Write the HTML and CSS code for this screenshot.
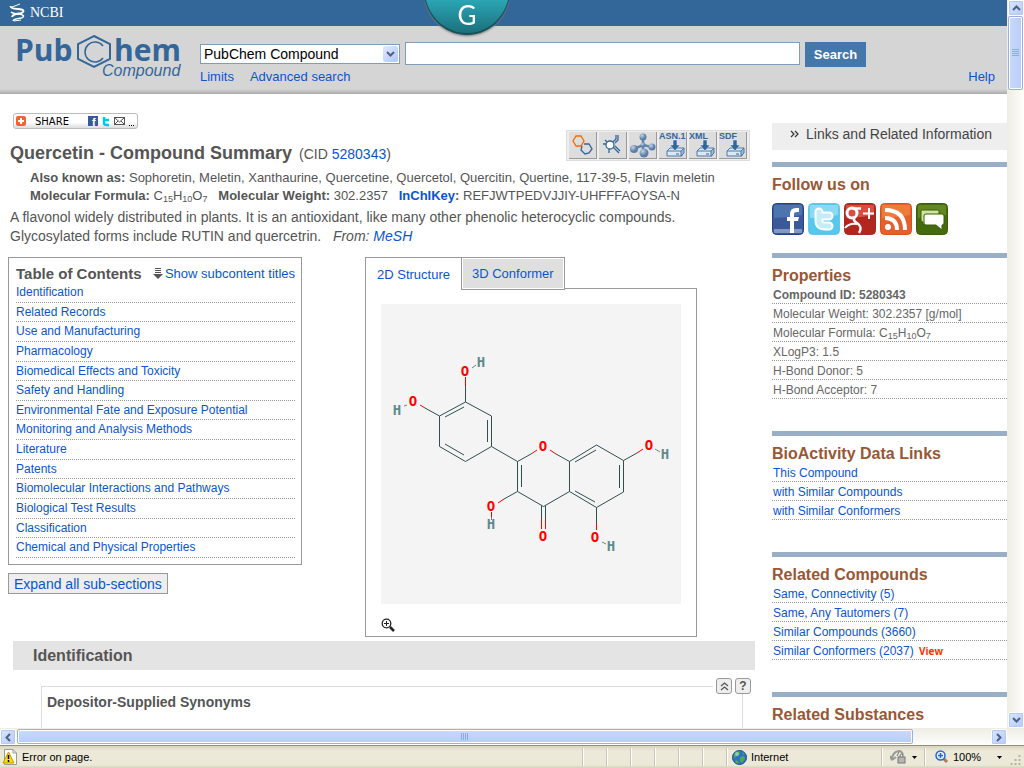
FILE: index.html
```html
<!DOCTYPE html>
<html lang="en">
<head>
  <meta charset="UTF-8" />
  <meta name="viewport" content="width=device-width, initial-scale=1.0"/>
  <title>Quercetin - PubChem</title>
  <link rel="stylesheet" href="styles.css">
</head>
<body>
  <div class="view">
    <div class="page">
      <div class="ncbi-bar">
        <a href="#" class="ncbi">
          <svg width="16" height="20" viewBox="0 0 16 20" fill="none" stroke="#fff">
            <path d="M1.500 3C2 8 14 4 14.500 8C14 12 5 9 3 14" stroke-width="2"/>
            <path d="M2 9C5 12 14 10 14.500 13C14 17 6 14 4 18" stroke-width="1.600"/>
            <path d="M3 4L11 1M5 18L12 17" stroke-width="1"/>
          </svg>
          NCBI
        </a>
      </div>
      <a href="#" class="badge" aria-label="G">
        <svg width="84" height="36" viewBox="0 0 84 36">
          <defs>
            <linearGradient id="teal" x1="0" y1="0" x2="0" y2="1">
              <stop offset="0" stop-color="#2aa5b4"/><stop offset="1" stop-color="#1d6f7c"/>
            </linearGradient>
          </defs>
          <path d="M0 0C5 21 22 35 42 35S79 21 84 0Z" fill="#14525c"/>
          <path d="M1 0C6 20 23 33 42 33S78 20 83 0Z" fill="url(#teal)"/>
          <text x="42" y="25" text-anchor="middle" class="badge-g">G</text>
        </svg>
      </a>

      <header class="header">
        <a href="#" class="logo">
          <svg width="172" height="52" viewBox="0 0 172 52">
            <text x="0" y="27" class="logo-big">Pub</text>
            <text x="99" y="27" class="logo-big">hem</text>
            <g fill="none" stroke="#369">
              <path d="M79 2L95 10V25L79 33L63 25V10Z" stroke-width="2"/>
              <path d="M88 12A10 10 0 1 0 88 24" stroke-width="1.5"/>
            </g>
            <text x="87" y="42" class="logo-small">Compound</text>
          </svg>
        </a>
        <form class="search">
          <div class="search-row">
            <div class="select-wrap">
              <select aria-label="Database">
                <option>PubChem Compound</option>
              </select>
              <span class="arrow"><svg width="9" height="6" viewBox="0 0 9 6"><path d="M1 1L4.500 4.500L8 1" fill="none" stroke="#4d6185" stroke-width="2"/></svg></span>
            </div>
            <input type="text" class="query" aria-label="Search term">
            <button type="button" class="btn-search">Search</button>
          </div>
          <div class="search-links">
            <a href="#">Limits</a>
            <a href="#">Advanced search</a>
            <a href="#" class="help">Help</a>
          </div>
        </form>
      </header>

      <div class="columns">
        <main class="main">
          <button type="button" class="share">
            <svg width="10" height="10" viewBox="0 0 10 10"><rect width="10" height="10" rx="2" fill="#f26334"/><path d="M5 2V8M2 5H8" stroke="#fff" stroke-width="2"/></svg>
            <span class="share-text">SHARE</span>
            <svg width="47" height="11" viewBox="0 0 47 11">
              <rect width="10" height="10" fill="#3b5998"/>
              <text x="4" y="10" class="mini-f">f</text>
              <path d="M16 1V7Q16 9 19 9H21M15 4H21" fill="none" stroke="#00c8e8" stroke-width="2.500"/>
              <rect x="26.500" y="1.500" width="10" height="7" fill="#fff" stroke="#555"/>
              <path d="M27 2L31.500 6L36 2M27 8L30 5M36 8L33 5" fill="none" stroke="#555"/>
              <path d="M41 9.500H42M43 9.500H44M45 9.500H46" stroke="#000"/>
            </svg>
          </button>

          <div class="title-row">
            <h1>Quercetin - Compound Summary <span class="cid">(CID <a href="#">5280343</a>)</span></h1>
            <div class="tools">
              <button type="button" aria-label="Similar compounds">
                <svg width="24" height="24" viewBox="0 0 24 24" fill="none"><path d="M5 3H10L13 8L10 13H5L2 8Z" stroke="#f60" stroke-width="1.300"/><path d="M13 11H18L21 16L18 20L14 21L10 17L11 13" stroke="#369" stroke-width="1.300"/></svg>
              </button>
              <button type="button" aria-label="Structure search">
                <svg width="24" height="24" viewBox="0 0 24 24" fill="none" stroke="#369" stroke-width="1.300"><circle cx="9" cy="12" r="4" fill="#fff"/><path d="M2 11H5M8 16V20M12 9L15 6V2M17 2V7L14 10M12 14L18 20M14 13L19 18M6 9L4 7"/></svg>
              </button>
              <button type="button" aria-label="3D conformers">
                <svg width="26" height="26" viewBox="0 0 26 26"><defs><radialGradient id="ball" cx=".35" cy=".3"><stop offset="0" stop-color="#c4d5e8"/><stop offset="1" stop-color="#5c7fa8"/></radialGradient></defs><path d="M13 5V21M4 17L13 13L22 15" fill="none" stroke="#6485aa" stroke-width="2.500"/><g fill="url(#ball)"><circle cx="13" cy="5" r="3.500"/><circle cx="4" cy="17" r="4"/><circle cx="22" cy="15" r="3.500"/><circle cx="14" cy="21" r="4.500"/><circle cx="13" cy="13" r="2.500"/></g></svg>
              </button>
              <button type="button" aria-label="Download ASN.1">
                <svg width="28" height="28" viewBox="0 0 28 28"><text x="0" y="8" class="fmt">ASN.1</text><use href="#disk"/></svg>
              </button>
              <button type="button" aria-label="Download XML">
                <svg width="28" height="28" viewBox="0 0 28 28"><text x="0" y="8" class="fmt">XML</text><use href="#disk"/></svg>
              </button>
              <button type="button" aria-label="Download SDF">
                <svg width="28" height="28" viewBox="0 0 28 28">
                  <defs>
                    <g id="disk">
                      <path d="M8 20L11 17H25L23 20V25H8Z" fill="#dce9f5" stroke="#4a78a8"/>
                      <path d="M8 20H22L25 17V22L22 25V20" fill="#9dbcd9" stroke="#4a78a8"/>
                      <path d="M14 9H18V14H21L16 20L11 14H14Z" fill="#336699" stroke="#e8f0f8" stroke-width=".5"/>
                      <path d="M17 23H20" stroke="#369"/>
                    </g>
                  </defs>
                  <text x="0" y="8" class="fmt">SDF</text><use href="#disk"/>
                </svg>
              </button>
            </div>
          </div>

          <div class="facts">
            <p><b>Also known as:</b> Sophoretin, Meletin, Xanthaurine, Quercetine, Quercetol, Quercitin, Quertine, 117-39-5, Flavin meletin</p>
            <p><b>Molecular Formula:</b> C<sub>15</sub>H<sub>10</sub>O<sub>7</sub> &nbsp; <b>Molecular Weight:</b> 302.2357 &nbsp; <b><a href="#">InChIKey</a>:</b> REFJWTPEDVJJIY-UHFFFAOYSA-N</p>
          </div>
          <p class="desc">A flavonol widely distributed in plants. It is an antioxidant, like many other phenolic heterocyclic compounds.<br>
          Glycosylated forms include RUTIN and quercetrin. &nbsp; <i>From: <a href="#">MeSH</a></i></p>

          <div class="overview">
            <div class="toc-col">
              <nav class="toc">
                <div class="toc-head">
                  <h2>Table of Contents</h2>
                  <a href="#"><svg width="12" height="12" viewBox="0 0 12 12"><path d="M3 .5H9M3 2.500H9M3 4.500H9" stroke="#555"/><path d="M1 6H11L6 11Z" fill="#555"/></svg>Show subcontent titles</a>
                </div>
                <ul>
                  <li><a href="#">Identification</a></li>
                  <li><a href="#">Related Records</a></li>
                  <li><a href="#">Use and Manufacturing</a></li>
                  <li><a href="#">Pharmacology</a></li>
                  <li><a href="#">Biomedical Effects and Toxicity</a></li>
                  <li><a href="#">Safety and Handling</a></li>
                  <li><a href="#">Environmental Fate and Exposure Potential</a></li>
                  <li><a href="#">Monitoring and Analysis Methods</a></li>
                  <li><a href="#">Literature</a></li>
                  <li><a href="#">Patents</a></li>
                  <li><a href="#">Biomolecular Interactions and Pathways</a></li>
                  <li><a href="#">Biological Test Results</a></li>
                  <li><a href="#">Classification</a></li>
                  <li><a href="#">Chemical and Physical Properties</a></li>
                </ul>
              </nav>
              <button type="button" class="expand">Expand all sub-sections</button>
            </div>

            <div class="structure">
              <div class="tabs">
                <button type="button" class="tab active">2D Structure</button>
                <button type="button" class="tab">3D Conformer</button>
              </div>
              <div class="panel">
                <svg class="molecule" width="300" height="300" viewBox="0 0 300 300">
                  <g fill="none" stroke="#2f4f4f" stroke-width="1">
                    <!-- catechol ring -->
                    <path d="M84.500 98L110.500 112V142.500L84.500 157.500L58.500 142.500V112Z"/>
                    <path d="M64 113L83 103M106.500 116V138M64 140L83 151"/>
                    <path d="M84.500 98V82M58.500 112L44 104M110.500 142.500L136.500 157.500"/>
                    <!-- chromenone -->
                    <path d="M150 150L136.500 157.500V187.500L162.500 202.500L188.500 187.500V157.500L175 150"/>
                    <path d="M140.500 161V183M188.500 157.500L215.500 141L242.500 156.500V188L215.500 203.500L188.500 187.500"/>
                    <path d="M194 158L215 146M238.500 161V184M194 187L214 198"/>
                    <path d="M160.500 202V216M164.500 202V216M136.500 187.500L123 195M242.500 156.500L256 149M215.500 203.500V220"/>
                  </g>
                  <g fill="none" stroke="#f00" stroke-width="1">
                    <path d="M84.500 82V73M44 104L39 101M150 150L156 146M175 150L169 146M123 195L117 199"/>
                    <path d="M160.500 216V225M164.500 216V225M256 149L262 145M215.500 220V226M110.500 208V213"/>
                  </g>
                  <path d="M91 64L95 61M26 101L23 102M274 145L279 148M221 238L225 240M110.500 213V216" fill="none" stroke="#5f8a8a"/>
                  <g class="atom oxygen">
                    <text x="84" y="72">O</text>
                    <text x="32" y="102">O</text>
                    <text x="162" y="147">O</text>
                    <text x="268" y="146">O</text>
                    <text x="110" y="207">O</text>
                    <text x="162" y="237">O</text>
                    <text x="214" y="238">O</text>
                  </g>
                  <g class="atom hydrogen">
                    <text x="100" y="63">H</text>
                    <text x="16" y="111">H</text>
                    <text x="284" y="155">H</text>
                    <text x="110" y="225">H</text>
                    <text x="230" y="247">H</text>
                  </g>
                </svg>
                <button type="button" class="magnify" aria-label="Zoom">
                  <svg width="14" height="14" viewBox="0 0 14 14" fill="none"><circle cx="5.500" cy="5.500" r="4.300" stroke="#222" stroke-width="1.300"/><path d="M5.500 3V8M3 5.500H8" stroke="#222"/><path d="M9 9L13 13" stroke="#222" stroke-width="2.500"/></svg>
                </button>
              </div>
            </div>
          </div>

          <h2 class="section-title">Identification</h2>
          <section class="sub">
            <h3>Depositor-Supplied Synonyms</h3>
            <div class="sub-tools">
              <button type="button" aria-label="Collapse"><svg width="9" height="9" viewBox="0 0 9 9"><path d="M1 4L4.500 1L8 4M1 8L4.500 5L8 8" fill="none" stroke="#555" stroke-width="1.300"/></svg></button>
              <button type="button">?</button>
            </div>
          </section>
        </main>

        <aside class="side">
          <a href="#" class="links-info"><svg width="9" height="8" viewBox="0 0 9 8"><path d="M1 1L4 4L1 7M5 1L8 4L5 7" fill="none" stroke="#333" stroke-width="1.200"/></svg>Links and Related Information</a>

          <section class="box">
            <h2>Follow us on</h2>
            <div class="social">
              <a href="#" aria-label="Facebook"><svg width="32" height="32" viewBox="0 0 32 32"><rect x=".5" y=".5" width="31" height="31" rx="4" fill="#3b5998" stroke="#1f4384"/><path d="M2 2H30V12Q16 15 2 15Z" fill="#4c74ad"/><path d="M2 26H30V30H2Z" fill="#8397c4"/><path d="M18 30V18H15V14H18V11Q18 5 24 5H27V9H25Q22 9 22 11V14H27L26 18H22V30Z" fill="#fff"/></svg></a>
              <a href="#" aria-label="Twitter"><svg width="32" height="32" viewBox="0 0 32 32"><rect x=".5" y=".5" width="31" height="31" rx="4" fill="#55c8ee" stroke="#6cc3e4"/><path d="M2 2H30V12Q16 15 2 15Z" fill="#8bdaf3"/><path d="M11 9V18Q11 23 17 23H21M11 13H21" fill="none" stroke="#fff" stroke-width="9" stroke-linecap="round"/><path d="M11 9V18Q11 23 17 23H21M11 13H21" fill="none" stroke="#c4ecfa" stroke-width="5" stroke-linecap="round"/></svg></a>
              <a href="#" aria-label="Google Plus"><svg width="32" height="32" viewBox="0 0 32 32"><rect x=".5" y=".5" width="31" height="31" rx="4" fill="#b3261e" stroke="#a52a22"/><path d="M2 2H30V12Q16 15 2 15Z" fill="#d94e40"/><g fill="none" stroke="#fff"><ellipse cx="8" cy="10" rx="5" ry="5" stroke-width="3"/><path d="M8 5.500H17M11 15Q8 17 13 20Q19 24 15 30" stroke-width="2.500"/><path d="M1 25Q5 20 13 21M25 5V16M19 10.500H30" stroke-width="2"/></g></svg></a>
              <a href="#" aria-label="RSS"><svg width="32" height="32" viewBox="0 0 32 32"><rect x=".5" y=".5" width="31" height="31" rx="4" fill="#e6602b" stroke="#d8521e"/><path d="M2 2H30V12Q16 15 2 15Z" fill="#f07a3a"/><circle cx="8" cy="24" r="3" fill="#fff"/><path d="M5 15Q17 15 17 27M5 7Q25 7 25 27" fill="none" stroke="#fff" stroke-width="4"/></svg></a>
              <a href="#" aria-label="Blog"><svg width="32" height="32" viewBox="0 0 32 32"><rect x=".5" y=".5" width="31" height="31" rx="4" fill="#466b0e" stroke="#3c5c0a"/><path d="M2 2H30V12Q16 15 2 15Z" fill="#64861f"/><path d="M6 7H22Q23 7 23 8V17Q23 19 21 19H10L7 22V19Q5 19 5 17V8Q5 7 6 7Z" fill="#cfe3a0" stroke="#3c5c0a"/><path d="M10 11H26Q28 11 28 13V20Q28 22 26 22V27L20 22H10Q8 22 8 20V13Q8 11 10 11Z" fill="#fff" stroke="#3c5c0a"/></svg></a>
            </div>
          </section>

          <section class="box">
            <h2>Properties</h2>
            <ul>
              <li><b>Compound ID: 5280343</b></li>
              <li>Molecular Weight: 302.2357 [g/mol]</li>
              <li>Molecular Formula: C<sub>15</sub>H<sub>10</sub>O<sub>7</sub></li>
              <li>XLogP3: 1.5</li>
              <li>H-Bond Donor: 5</li>
              <li>H-Bond Acceptor: 7</li>
            </ul>
          </section>

          <section class="box">
            <h2>BioActivity Data Links</h2>
            <ul>
              <li><a href="#">This Compound</a></li>
              <li><a href="#">with Similar Compounds</a></li>
              <li><a href="#">with Similar Conformers</a></li>
            </ul>
          </section>

          <section class="box">
            <h2>Related Compounds</h2>
            <ul>
              <li><a href="#">Same, Connectivity (5)</a></li>
              <li><a href="#">Same, Any Tautomers (7)</a></li>
              <li><a href="#">Similar Compounds (3660)</a></li>
              <li><a href="#">Similar Conformers (2037)</a> <a href="#" class="view-link">View</a></li>
            </ul>
          </section>

          <section class="box">
            <h2>Related Substances</h2>
          </section>
        </aside>
      </div>
    </div>

    <div class="vbar">
      <button type="button" class="sb" aria-label="Scroll up"><svg width="9" height="6" viewBox="0 0 9 6"><path d="M1 5L4.500 1.500L8 5" fill="none" stroke="#4d6185" stroke-width="2"/></svg></button>
      <div class="thumb-v"><svg width="7" height="8" viewBox="0 0 7 8"><path d="M0 .5H7M0 2.500H7M0 4.500H7M0 6.500H7" stroke="#8ba9f0"/></svg></div>
      <button type="button" class="sb" aria-label="Scroll down"><svg width="9" height="6" viewBox="0 0 9 6"><path d="M1 1L4.500 4.500L8 1" fill="none" stroke="#4d6185" stroke-width="2"/></svg></button>
    </div>
  </div>

  <div class="hbar">
    <button type="button" class="sb" aria-label="Scroll left"><svg width="6" height="9" viewBox="0 0 6 9"><path d="M5 1L1.500 4.500L5 8" fill="none" stroke="#4d6185" stroke-width="2"/></svg></button>
    <div class="thumb-h"><svg width="8" height="7" viewBox="0 0 8 7"><path d="M.5 0V7M2.500 0V7M4.500 0V7M6.500 0V7" stroke="#8ba9f0"/></svg></div>
    <button type="button" class="sb" aria-label="Scroll right"><svg width="6" height="9" viewBox="0 0 6 9"><path d="M1 1L4.500 4.500L1 8" fill="none" stroke="#4d6185" stroke-width="2"/></svg></button>
  </div>

  <footer class="status">
    <div class="msg">
      <svg width="16" height="16" viewBox="0 0 16 16"><path d="M2.500 .5H11L14.500 4V15.500H2.500Z" fill="#fff" stroke="#999"/><path d="M11 .5V4H14.500" fill="none" stroke="#999"/><path d="M6.500 3L12 14H1Z" fill="#fd0" stroke="#b90"/><path d="M6.500 6V10M6.500 11V13" stroke="#000" stroke-width="1.500"/></svg>
      Error on page.
    </div>
    <div class="cell"></div><div class="cell"></div><div class="cell"></div><div class="cell"></div><div class="cell"></div><div class="cell"></div>
    <div class="zone">
      <svg width="15" height="15" viewBox="0 0 15 15"><circle cx="7.500" cy="7.500" r="7" fill="#2b6fd6" stroke="#1b4c94"/><path d="M3 3Q6 0 8 2L7 5L4 7L2 8Q1 5 3 3M8 7L12 6L13 9L10 13L8 11ZM4 10L7 12L6 14L3 12ZM10 2L13 4L11 5Z" fill="#4cae3c"/><circle cx="5" cy="4" r="2" fill="#bfe0ff" opacity=".6"/></svg>
      Internet
    </div>
    <div class="lock">
      <svg width="16" height="14" viewBox="0 0 16 14"><path d="M2 10Q2 2 9 1Q12 1 13 5M2 10L0 6M2 10L6 7" fill="none" stroke="#999" stroke-width="2"/><rect x="8" y="7" width="7" height="6" fill="#b5b5b5" stroke="#777"/><path d="M10 7V5Q11.500 3 13 5V7M7 6L9 2" fill="none" stroke="#777"/></svg>
      <svg width="5" height="3" viewBox="0 0 5 3"><path d="M0 0H5L2.500 3Z"/></svg>
    </div>
    <div class="zoom">
      <svg width="14" height="14" viewBox="0 0 14 14"><path d="M8 8L12 12" stroke="#a87c5c" stroke-width="3"/><circle cx="5.500" cy="5.500" r="4.500" fill="#e4f1ff" stroke="#2d68c4" stroke-width="1.500"/><path d="M5.500 3V8M3 5.500H8" stroke="#2d68c4" stroke-width="1.500"/></svg>
      100%
      <svg class="drop" width="5" height="3" viewBox="0 0 5 3"><path d="M0 0H5L2.500 3Z"/></svg>
    </div>
    <svg class="grip" width="12" height="12" viewBox="0 0 12 12" fill="#b8b4a2"><path d="M9 1h2v2h-2zM5 5h2v2h-2zM9 5h2v2h-2zM1 9h2v2h-2zM5 9h2v2h-2zM9 9h2v2h-2z"/></svg>
  </footer>
</body>
</html>
```
FILE: styles.css
```css
* {
  box-sizing: border-box;
}
body {
  margin: 0;
  height: 100vh;
  display: flex;
  flex-direction: column;
  overflow: hidden;
  font-family: "Liberation Sans", Arial, sans-serif;
  font-size: 12px;
  color: #555;
  background: #fff;
}
h1, h2, h3, p, ul {
  margin: 0;
  padding: 0;
}
ul {
  list-style: none;
}
a {
  color: #0a55cf;
  text-decoration: none;
}
button {
  font-family: inherit;
  padding: 0;
  cursor: pointer;
}
svg {
  flex: none;
}
sub {
  font-size: 9px;
  line-height: 0;
  vertical-align: -2px;
}
.view {
  flex: 1;
  display: flex;
  min-height: 0;
}
.page {
  flex: 1;
  min-width: 0;
  position: relative;
  overflow: hidden;
}

/* top */
.ncbi-bar {
  height: 26px;
  padding-left: 9px;
  background: #369;
}
.ncbi {
  display: flex;
  align-items: center;
  gap: 5px;
  height: 26px;
  color: #fff;
  font-family: "Liberation Serif", serif;
  font-size: 14px;
}
.badge {
  position: absolute;
  top: 0;
  left: 425px;
  filter: drop-shadow(0 1px 1px #777);
}
.badge-g {
  font: 26px Lato, sans-serif;
  fill: #fff;
}
.header {
  display: flex;
  height: 68px;
  padding: 8px 12px 0 15px;
  background: linear-gradient(#d5d5d5 63px, #aaa);
}
.logo {
  width: 185px;
}
.logo-big {
  font: bold 30px "Open Sans", sans-serif;
  fill: #369;
}
.logo-small {
  font: italic 16px "Liberation Sans", sans-serif;
  fill: #369;
}
.search {
  flex: 1;
  padding-top: 8px;
}
.search-row {
  display: flex;
  align-items: flex-start;
  gap: 5px;
  padding-right: 129px;
}
.select-wrap {
  position: relative;
  padding-top: 2px;
}
.select-wrap select {
  display: block;
  width: 200px;
  height: 20px;
  padding: 0 3px;
  appearance: none;
  border: 1px solid #7f9db9;
  border-radius: 0;
  background: #fff;
  color: #000;
  font: 14px "Liberation Sans", sans-serif;
}
.arrow {
  position: absolute;
  right: 2px;
  top: 4px;
  width: 15px;
  height: 16px;
  display: flex;
  align-items: center;
  justify-content: center;
  border-radius: 2px;
  background: linear-gradient(135deg, #e1eafe, #aec8f7);
  pointer-events: none;
}
.query {
  flex: 1;
  min-width: 0;
  height: 23px;
  border: 1px solid #7f9db9;
}
.btn-search {
  width: 61px;
  height: 25px;
  border: none;
  background: #47a;
  color: #fff;
  font-size: 13px;
  font-weight: bold;
}
.search-links {
  display: flex;
  gap: 16px;
  font-size: 13px;
  line-height: 19px;
}
.help {
  margin-left: auto;
}

/* columns */
.columns {
  display: grid;
  grid-template-columns: 1fr 235px;
  gap: 17px;
}
.main {
  padding-top: 19px;
}
.share {
  display: flex;
  align-items: center;
  width: 125px;
  height: 16px;
  margin-left: 13px;
  padding: 0 2px;
  border: 1px solid #bbb;
  border-radius: 3px;
  background: linear-gradient(#fff 60%, #ddd);
}
.share-text {
  flex: 1;
  padding-left: 9px;
  text-align: left;
  color: #000;
  font: 10px "DejaVu Sans", sans-serif;
}
.mini-f {
  font: bold 11px "Liberation Sans", sans-serif;
  fill: #fff;
}
.title-row {
  display: flex;
  justify-content: space-between;
  height: 40px;
  padding: 1px 5px 0 10px;
}
.title-row h1 {
  padding-top: 12px;
  font-size: 18px;
  line-height: 22px;
}
.cid {
  padding-left: 2px;
  font-size: 14px;
  font-weight: normal;
}
.tools {
  display: flex;
  gap: 2px;
  height: 31px;
  padding: 1px 2px;
  border: 1px solid #ddd;
  background: #eee;
}
.tools button {
  display: flex;
  align-items: center;
  justify-content: center;
  width: 28px;
  height: 27px;
  border: solid #999;
  border-width: 0 1px 1px 0;
  background: #ddd;
}
.fmt {
  font: bold 9px "Liberation Sans", sans-serif;
  fill: #369;
}
.facts {
  padding-left: 30px;
  font-size: 13px;
  line-height: 18px;
}
.desc {
  padding: 3px 0 0 10px;
  font-size: 14px;
  line-height: 19px;
}
.overview {
  display: flex;
  align-items: flex-start;
  gap: 63px;
  padding: 11px 0 0 8px;
}
.toc {
  width: 294px;
  padding: 7px 6px 6px;
  border: 1px solid #999;
}
.toc-head {
  display: flex;
  align-items: center;
  justify-content: space-between;
  padding-left: 1px;
  font-size: 13px;
  line-height: 18px;
}
.toc-head h2 {
  font-size: 15px;
}
.toc-head a {
  display: flex;
  align-items: center;
  gap: 1px;
}
.toc ul {
  display: grid;
  grid-auto-rows: 1fr;
  min-height: 275px;
  margin-left: 1px;
}
.toc li {
  line-height: 18px;
  border-bottom: 1px dotted #999;
}
.expand {
  display: block;
  height: 21px;
  margin-top: 8px;
  padding: 0 5px;
  border: 1px solid #999;
  background: #eee;
  color: #0a55cf;
  font-size: 14px;
}
.structure {
  width: 332px;
}
.tabs {
  display: flex;
  position: relative;
  height: 32px;
}
.tab {
  height: 33px;
  padding: 0 10px;
  border: 1px solid #999;
  background: #dfdfdf;
  box-shadow: inset 0 0 0 1px #fff;
  color: #0a55cf;
  font-size: 13px;
}
.tab.active {
  padding: 0 11px;
  border-width: 1px 0 0 1px;
  background: #fff;
}
.panel {
  margin-top: -1px;
  padding: 15px;
  padding-bottom: 1px;
  border: 1px solid #999;
}
.molecule {
  display: block;
  background: #f4f4f4;
}
.atom {
  font: bold 14px "DejaVu Sans Mono", monospace;
  text-anchor: middle;
}
.oxygen {
  fill: #f00;
}
.hydrogen {
  fill: #5f8a8a;
}
.magnify {
  display: block;
  margin-top: 14px;
  border: none;
  background: none;
}
.section-title {
  margin: 4px 0 0 13px;
  padding-left: 20px;
  background: #e4e4e4;
  font-size: 16px;
  line-height: 29px;
}
.sub {
  position: relative;
  height: 120px;
  margin: 16px 12px 0 41px;
  padding: 7px 5px;
  border: 1px solid #ddd;
}
.sub h3 {
  font-size: 14px;
  line-height: 17px;
}
.sub-tools {
  position: absolute;
  top: -9px;
  right: -9px;
  display: flex;
  gap: 3px;
  padding-left: 3px;
  background: #fff;
}
.sub-tools button {
  display: flex;
  align-items: center;
  justify-content: center;
  width: 16px;
  height: 16px;
  border: 1px solid #999;
  border-radius: 3px;
  background: #eee;
  color: #555;
  font-size: 12px;
  font-weight: bold;
}

/* right side */
.side {
  padding-top: 29px;
}
.links-info {
  display: flex;
  align-items: center;
  gap: 7px;
  height: 27px;
  margin-bottom: 12px;
  padding: 0 0 6px 18px;
  background: #eee;
  color: #444;
  font-size: 14px;
}
.box {
  padding-bottom: 32px;
  border-top: 5px solid #98afc7;
}
.box h2 {
  color: #985735;
  font-size: 16px;
  line-height: 19px;
  padding-top: 8px;
}
.box li {
  height: 19px;
  padding-left: 1px;
  line-height: 21px;
  border-bottom: 1px dotted #999;
  color: #666;
}
.social {
  display: flex;
  gap: 4px;
  height: 32px;
  margin: 9px 0 -14px;
}
.view-link {
  margin-left: 2px;
  color: #f30;
  font: bold 10px "Open Sans", sans-serif;
}

/* scrollbars */
.vbar {
  display: flex;
  flex-direction: column;
  width: 17px;
  padding: 0 1px;
  background: linear-gradient(90deg, #eeede5, #fefefb);
}
.hbar {
  display: flex;
  height: 17px;
  padding: 1px 17px 1px 0;
  background: linear-gradient(#eeede5, #fefefb);
}
.sb {
  display: flex;
  align-items: center;
  justify-content: center;
  width: 16px;
  height: 16px;
  border: 1px solid #fff;
  border-radius: 2px;
  background: linear-gradient(135deg, #dbe6fe, #b4cbf8);
  box-shadow: inset 0 0 0 1px #b5c9f4;
}
.vbar .sb:last-child {
  margin-top: auto;
}
.hbar .sb:last-child {
  margin-left: auto;
}
.thumb-v, .thumb-h {
  display: flex;
  align-items: center;
  justify-content: center;
  border: 1px solid #98b0e4;
  border-radius: 2px;
  box-shadow: inset 0 0 0 1px #fff;
}
.thumb-v {
  height: 74px;
  background: linear-gradient(90deg, #cad9fc, #b8cdfa);
}
.thumb-h {
  width: 89%;
  margin-left: 1px;
  background: linear-gradient(#cad9fc, #b8cdfa);
}

/* status bar */
.status {
  display: flex;
  align-items: stretch;
  height: 23px;
  padding: 2px 0;
  border-top: 1px solid #918f80;
  background: linear-gradient(#d8d4c0, #ece9d8 5px, #ece9d8 19px, #d5d1bc);
  color: #000;
  font-size: 11px;
}
.status > div {
  display: flex;
  align-items: center;
  gap: 4px;
}
.status > div + div {
  border-left: 1px solid #c9c5b2;
  box-shadow: inset 1px 0 #fff;
}
.msg {
  flex: 1;
  padding-left: 2px;
}
.cell {
  width: 24px;
}
.zone {
  width: 155px;
  padding-left: 5px;
}
.lock {
  width: 43px;
  padding-left: 8px;
}
.status .lock {
  gap: 6px;
}
.zoom {
  width: 83px;
  padding-left: 10px;
}
.drop {
  margin-left: 12px;
}
.grip {
  align-self: flex-end;
  width: 17px;
}
```
